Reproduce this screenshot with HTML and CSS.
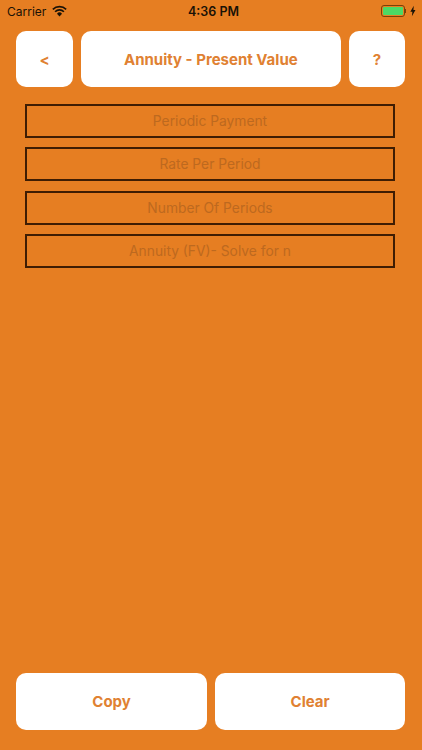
FILE: index.html
```
<!DOCTYPE html>
<html lang="en">
<head>
<meta charset="utf-8">
<title>Annuity - Present Value</title>
<link rel="stylesheet" href="styles.css">
</head>
<body>
<div class="screen">
  <div class="status">
    <div class="status-left">
      <span>Carrier</span>
      <svg class="wifi" viewBox="0 0 16 12" width="15" height="12"><path d="M8 11.8 5.3 8.8a3.8 3.8 0 0 1 5.4 0z" fill="#1a1206"/><path d="M3.3 6.8a6.7 6.7 0 0 1 9.4 0" fill="none" stroke="#1a1206" stroke-width="1.8"/><path d="M.9 4.2a10.2 10.2 0 0 1 14.2 0" fill="none" stroke="#1a1206" stroke-width="1.8"/></svg>
    </div>
    <div class="status-time">4:36 PM</div>
    <div class="status-right">
      <span class="battery"><span class="battery-fill"></span></span>
      <span class="battery-cap"></span>
      <svg class="bolt" viewBox="0 0 7 12" width="6" height="12"><path d="M4.4 0 .4 6.8h2.4L2.2 12l4.2-7.2H4z" fill="#1a1206"/></svg>
    </div>
  </div>
  <div class="topbar">
    <button class="btn btn-small">&lt;</button>
    <button class="btn btn-title">Annuity - Present Value</button>
    <button class="btn btn-small">?</button>
  </div>
  <div class="fields">
    <div class="field">Periodic Payment</div>
    <div class="field">Rate Per Period</div>
    <div class="field">Number Of Periods</div>
    <div class="field">Annuity (FV)- Solve for n</div>
  </div>
  <div class="bottombar">
    <button class="btn btn-wide">Copy</button>
    <button class="btn btn-wide">Clear</button>
  </div>
</div>
</body>
</html>
```
FILE: styles.css
```
* { box-sizing: border-box; }
html, body { margin: 0; padding: 0; }
body { font-family: Inter, "Liberation Sans", sans-serif; }
.screen {
  width: 422px;
  height: 750px;
  background: #e67e22;
  display: flex;
  flex-direction: column;
  overflow: hidden;
}
.status {
  height: 20px;
  margin-top: 1px;
  padding: 0 6px 0 7px;
  display: grid;
  grid-template-columns: 1fr auto 1fr;
  align-items: center;
  font-size: 12px;
  color: #1a1206;
}
.status-left { display: flex; align-items: center; gap: 6px; }
.status-time { font-weight: 600; font-size: 12.5px; margin-left: 4px; }
.status-right { display: flex; align-items: center; justify-content: flex-end; }
.battery {
  width: 24px;
  height: 12px;
  border: 1px solid #7a4208;
  border-radius: 3px;
  padding: 1px;
  display: flex;
}
.battery-fill { flex: 1; background: #4cd964; border-radius: 1px; }
.battery-cap { width: 1.5px; height: 4px; background: #7a4208; margin-right: 4px; }
.topbar {
  margin-top: 10px;
  padding: 0 16.7px 0 16.3px;
  display: flex;
  gap: 8px;
}
.btn {
  border: 0;
  background: #fff;
  color: #e08132;
  font-family: inherit;
  font-weight: 700;
  font-size: 15px;
  border-radius: 10px;
  padding: 0;
}
.btn-small { width: 56.5px; height: 56px; }
.btn-title { flex: 1; height: 56px; }
.fields {
  margin-top: 17px;
  padding: 0 27px 0 25px;
  display: flex;
  flex-direction: column;
  gap: 9.3px;
}
.field {
  height: 34px;
  border: 2px solid #3f1d03;
  display: flex;
  align-items: center;
  justify-content: center;
  font-size: 13.8px;
  color: #bd691f;
}
.bottombar {
  margin-top: auto;
  margin-bottom: 20px;
  padding: 0 16.7px 0 16.3px;
  display: flex;
  gap: 8px;
}
.btn-wide { flex: 1; height: 57px; }
```
